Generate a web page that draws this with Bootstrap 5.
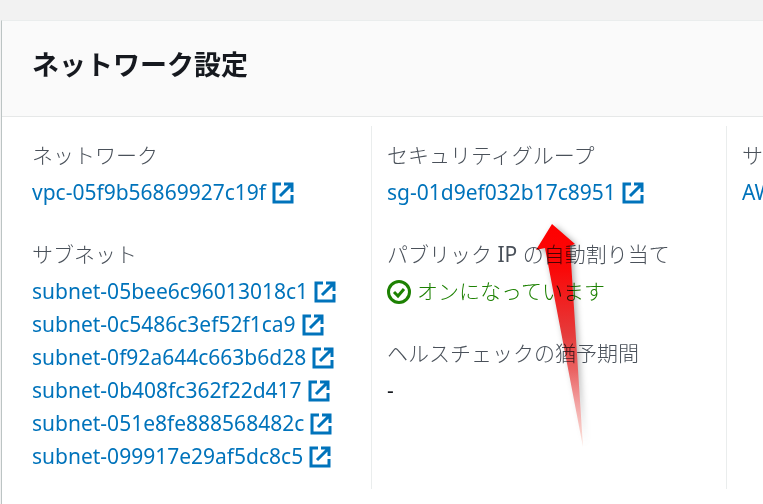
<!DOCTYPE html>
<html lang="ja">
<head>
<meta charset="utf-8">
<meta name="viewport" content="width=device-width, initial-scale=1">
<title>ネットワーク設定</title>
<link href="https://cdn.jsdelivr.net/npm/bootstrap@5.3.0/dist/css/bootstrap.min.css" rel="stylesheet">
<style>
  body { background: #f2f2f2; color: #16191f; font-family: "Noto Sans", "Noto Sans CJK JP", sans-serif; font-size: 21px; line-height: 33px; overflow-x: hidden; }
  .panel { margin: 20px 0 0 1px; min-height: calc(100vh - 20px); background: #fff; border-left: 1px solid #bcc4c4; border-top: 1px solid #eaeded; }
  .panel-head { background: #fafafa; border-bottom: 1px solid #e6e8e8; padding: 23px 30px 32px; }
  .panel-head h2 { font-family: "Noto Sans CJK JP", sans-serif; font-size: 27px; line-height: 40px; }
  .settings { display: grid; grid-template-columns: 355fr 355fr 37fr; padding: 9px 0 15px 14px; overflow: hidden; white-space: nowrap; }
  .settings dl { padding: 13px 15px 16px; min-width: 0; }
  .settings dl:first-child { padding-left: 16px; }
  .settings dl + dl { border-left: 1px solid #eaeded; }
  dt { color: #4a515a; font-weight: 300; margin-bottom: 4px; }
  dd { height: 33px; margin: 0; }
  dd + dt { margin-top: 29px; }
  dd a { color: #0073bb; text-decoration: none; }
  dd a:hover { text-decoration: underline; }
  .ext-link, .status { gap: 6px; }
  .ext { width: 22px; height: 22px; flex: none; }
  .status { color: #1d8102; font-weight: 300; }
  .status svg { width: 24px; height: 24px; flex: none; }
  .pointer { position: absolute; left: 525px; top: 215px; width: 75px; height: 240px; pointer-events: none; mix-blend-mode: multiply; }
</style>
<script src="https://cdn.jsdelivr.net/npm/bootstrap@5.3.0/dist/js/bootstrap.bundle.min.js"></script>
</head>
<body>
<svg class="d-none" aria-hidden="true">
  <symbol id="ext" viewBox="0 0 22 22"><path d="M9 2H2v18h18v-7M12 2h8v8M19 3L8 14" fill="none" stroke="#0073bb" stroke-width="3"/></symbol>
</svg>
<main class="panel">
  <header class="panel-head"><h2 class="fw-bold m-0">ネットワーク設定</h2></header>
  <div class="settings">
    <dl class="m-0">
      <dt>ネットワーク</dt>
      <dd><a href="#" class="ext-link d-inline-flex align-items-center">vpc-05f9b56869927c19f<svg class="ext"><use href="#ext"/></svg></a></dd>
      <dt>サブネット</dt>
      <dd><a href="#" class="ext-link d-inline-flex align-items-center">subnet-05bee6c96013018c1<svg class="ext"><use href="#ext"/></svg></a></dd>
      <dd><a href="#" class="ext-link d-inline-flex align-items-center">subnet-0c5486c3ef52f1ca9<svg class="ext"><use href="#ext"/></svg></a></dd>
      <dd><a href="#" class="ext-link d-inline-flex align-items-center">subnet-0f92a644c663b6d28<svg class="ext"><use href="#ext"/></svg></a></dd>
      <dd><a href="#" class="ext-link d-inline-flex align-items-center">subnet-0b408fc362f22d417<svg class="ext"><use href="#ext"/></svg></a></dd>
      <dd><a href="#" class="ext-link d-inline-flex align-items-center">subnet-051e8fe888568482c<svg class="ext"><use href="#ext"/></svg></a></dd>
      <dd><a href="#" class="ext-link d-inline-flex align-items-center">subnet-099917e29af5dc8c5<svg class="ext"><use href="#ext"/></svg></a></dd>
    </dl>
    <dl class="m-0">
      <dt>セキュリティグループ</dt>
      <dd><a href="#" class="ext-link d-inline-flex align-items-center">sg-01d9ef032b17c8951<svg class="ext"><use href="#ext"/></svg></a></dd>
      <dt>パブリック <span class="fw-normal">IP</span> の自動割り当て</dt>
      <dd class="status d-flex align-items-center"><svg viewBox="0 0 24 24" aria-hidden="true"><circle cx="12" cy="12" r="10.5" fill="none" stroke="#1d8102" stroke-width="3"/><path d="M7 12l4 4 6-7" fill="none" stroke="#1d8102" stroke-width="3"/></svg>オンになっています</dd>
      <dt>ヘルスチェックの猶予期間</dt>
      <dd>-</dd>
    </dl>
    <dl class="m-0">
      <dt>サ</dt>
      <dd><a href="#">AW</a></dd>
    </dl>
  </div>
</main>
<svg class="pointer" viewBox="525 215 75 240" aria-hidden="true">
  <defs>
    <linearGradient id="fade" x1="0" y1="224" x2="0" y2="447" gradientUnits="userSpaceOnUse">
      <stop offset="0" stop-color="#f00"/><stop offset=".2" stop-color="#fa0808"/><stop offset=".5" stop-color="#e53c3c"/><stop offset=".65" stop-color="#ea6060"/><stop offset=".8" stop-color="#f2a0a0"/><stop offset="1" stop-color="#fce8e0"/>
    </linearGradient>
    <linearGradient id="shade" x1="0" y1="224" x2="0" y2="447" gradientUnits="userSpaceOnUse">
      <stop offset="0" stop-opacity=".35"/><stop offset=".6" stop-opacity=".3"/><stop offset="1" stop-opacity=".04"/>
    </linearGradient>
    <filter id="soft" x="-40%" y="-10%" width="180%" height="120%"><feGaussianBlur stdDeviation="3"/></filter>
  </defs>
  <path d="M555 226L578 246L572 248L586 448L547 251L539 252Z" fill="url(#shade)" filter="url(#soft)"/>
  <path d="M552 224L575 244L570 246L583 447L545 248L536 250Z" fill="url(#fade)"/>
</svg>
</body>
</html>
